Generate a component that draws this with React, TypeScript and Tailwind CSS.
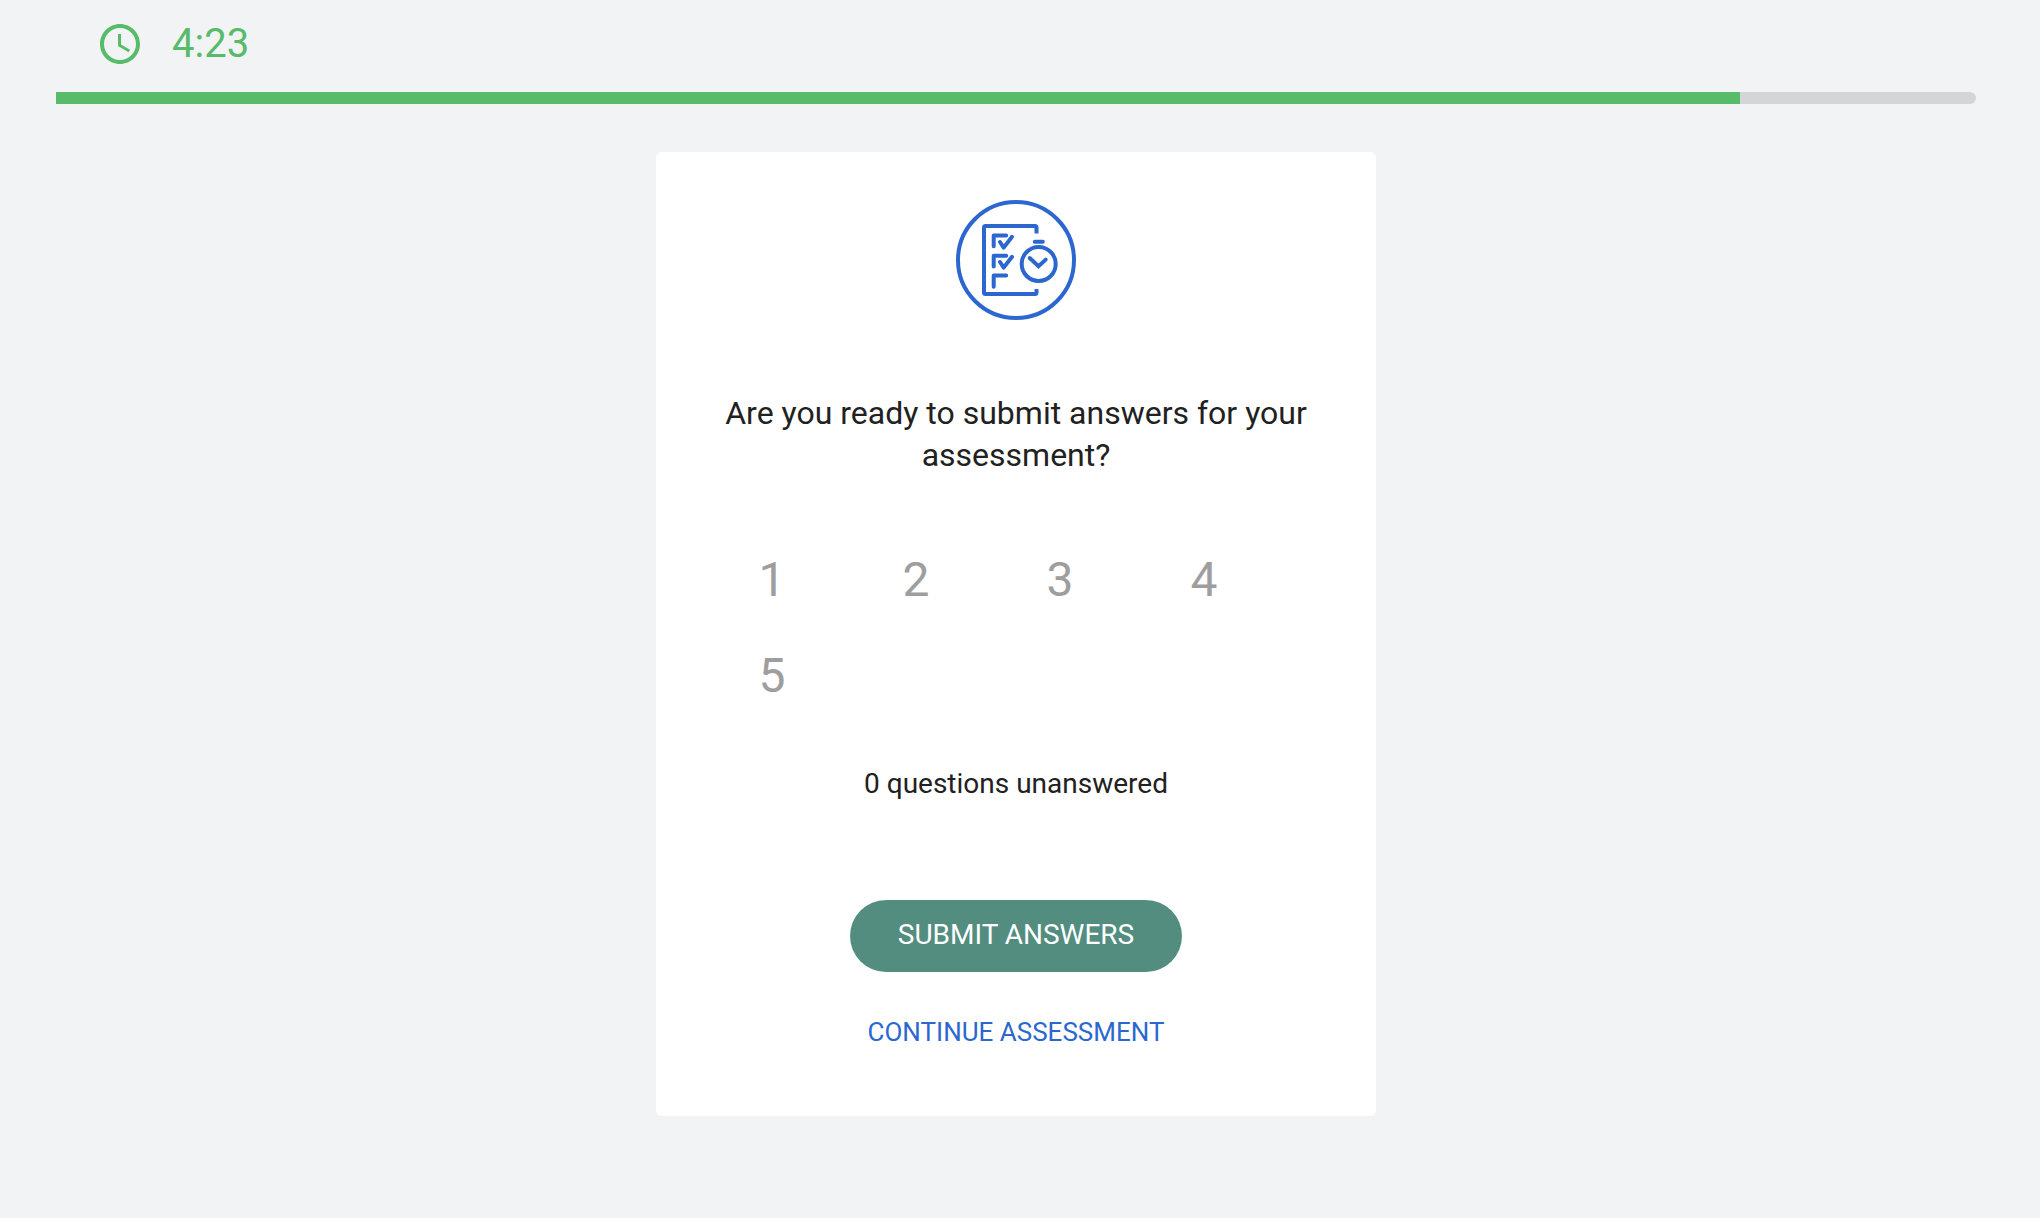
import * as React from "react";
import { MdAccessTime } from "react-icons/md";

const TOTAL_SECONDS = 300;
const QUESTIONS = [
  { id: 1, answered: true },
  { id: 2, answered: true },
  { id: 3, answered: true },
  { id: 4, answered: true },
  { id: 5, answered: true },
];

function formatTime(seconds: number) {
  const whole = Math.floor(seconds);
  const s = whole % 60;
  return `${Math.floor(whole / 60)}:${s < 10 ? "0" : ""}${s}`;
}

function AssessmentIcon() {
  return (
    <svg
      viewBox="0 0 120 120"
      className="size-30"
      fill="none"
      stroke="currentColor"
      strokeWidth="4"
      aria-hidden="true"
    >
      <circle cx="60" cy="60" r="58" />
      {/* sheet */}
      <path d="M80.5 33.5V27.5q0-1.5-1.5-1.5H29.5q-1.5 0-1.5 1.5v65q0 1.5 1.5 1.5H79q1.5 0 1.5-1.5V89" />
      {/* answer boxes */}
      <g strokeLinecap="round" strokeLinejoin="round">
        <path d="M37.7 46.3V35.4h12.5" />
        <path d="M37.7 66.5V55.7h12.5" />
        <path d="M37.7 86.8V75.4h12.5" />
        <path d="M44 42l3.7 5.6L56 36.8" />
        <path d="M44 62l3.7 5.6L56 56.8" />
      </g>
      {/* stopwatch */}
      <circle cx="82.7" cy="64" r="17" />
      <path d="M78.8 41.7h8" strokeLinecap="round" />
      <path d="M73.7 58l8.8 8.2 7.2-6.6" strokeLinecap="round" />
    </svg>
  );
}

function TimerBar({ secondsLeft }: { secondsLeft: number }) {
  return (
    <header>
      <div className="flex h-12 items-center gap-7 pl-10 text-[#57bb69]">
        <MdAccessTime className="size-12" aria-hidden="true" />
        <span role="timer" className="text-[40px] leading-12">
          {formatTime(secondsLeft)}
        </span>
      </div>
      <div className="mt-6 h-3 overflow-hidden rounded-r-full bg-[#d4d5d7]">
        <div
          className="h-full bg-[#57bb69]"
          style={{ width: `${(secondsLeft / TOTAL_SECONDS) * 100}%` }}
        />
      </div>
    </header>
  );
}

export default function App() {
  const [secondsLeft] = React.useState(263.2);
  const unanswered = QUESTIONS.filter((q) => !q.answered).length;

  return (
    <div className="min-h-screen bg-[#f1f3f5] pt-5 pr-16 pb-12 pl-14 font-['Roboto',sans-serif] text-[#212121]">
      <TimerBar secondsLeft={secondsLeft} />

      <main className="mx-auto mt-12 flex max-w-[720px] flex-col items-center rounded-md bg-white px-11 pt-12 pb-16">
        <div className="text-[#2b67cf]">
          <AssessmentIcon />
        </div>

        <h1 className="mt-18 text-center text-[32px] leading-[42px]">
          Are you ready to submit answers for your assessment?
        </h1>

        <div className="mt-14 flex w-full flex-wrap">
          {QUESTIONS.map((q) => (
            <button
              key={q.id}
              type="button"
              className={
                q.answered
                  ? "h-24 w-36 text-5xl text-[#9e9e9e]"
                  : "h-24 w-36 text-5xl text-[#2b67cf]"
              }
            >
              {q.id}
            </button>
          ))}
        </div>

        <p className="mt-10 text-[28px] leading-10">{unanswered} questions unanswered</p>

        <button
          type="button"
          className="mt-24 h-18 rounded-full bg-[#528d7f] px-12 pb-0.5 text-[28px] leading-10 text-white"
        >
          SUBMIT ANSWERS
        </button>
        <button type="button" className="mt-10 text-[26px] leading-10 text-[#2b67cf]">
          CONTINUE ASSESSMENT
        </button>
      </main>
    </div>
  );
}
